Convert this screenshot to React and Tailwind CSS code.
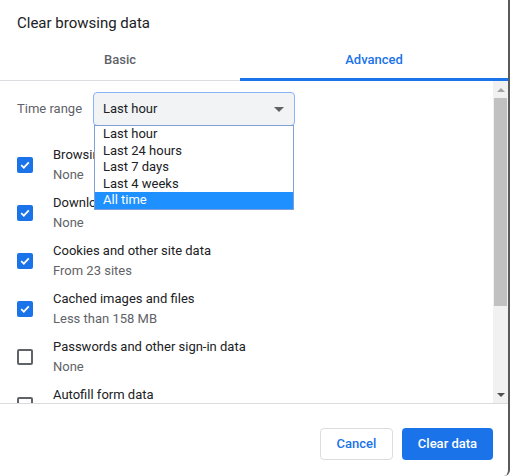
import React from 'react';

const items = [
  { title: 'Browsing history', sub: 'None', checked: true },
  { title: 'Download history', sub: 'None', checked: true },
  { title: 'Cookies and other site data', sub: 'From 23 sites', checked: true },
  { title: 'Cached images and files', sub: 'Less than 158 MB', checked: true },
  { title: 'Passwords and other sign-in data', sub: 'None', checked: false },
  { title: 'Autofill form data', sub: 'None', checked: false },
];

const ranges = ['Last hour', 'Last 24 hours', 'Last 7 days', 'Last 4 weeks', 'All time'];

function Checkbox({ checked }) {
  if (!checked) {
    return <div className="w-[16px] h-[16px] shrink-0 rounded-[2px] border-2 border-[#5f6368] bg-white" />;
  }
  return (
    <div className="w-[16px] h-[16px] shrink-0 rounded-[2px] bg-[#1a73e8] flex items-center justify-center">
      <svg width="12" height="12" viewBox="0 0 12 12">
        <path d="M2.2 6.2 L4.8 8.7 L9.8 3.4" fill="none" stroke="white" strokeWidth="1.8" />
      </svg>
    </div>
  );
}

export default function App() {
  return (
    <div className="w-[510px] h-[476px] bg-white flex flex-col border-r-2 border-[#5a5a5a] rounded-br-[6px] font-['Roboto','Liberation_Sans',sans-serif] text-[#202124] overflow-hidden">
      {/* Title */}
      <div className="h-[40px] pl-[17px] pt-[13px] text-[15px] leading-[20px]">Clear browsing data</div>

      {/* Tabs */}
      <div className="flex h-[41px]">
        <div className="w-[240px] flex items-center justify-center border-b border-[#dadce0] text-[13px] font-medium text-[#5f6368]">
          Basic
        </div>
        <div className="flex-1 flex items-center justify-center border-b-[3px] border-[#1a73e8] pt-[2px] text-[13px] font-medium text-[#1a73e8]">
          Advanced
        </div>
      </div>

      {/* Scroll area */}
      <div className="h-[323px] flex border-b border-[#dadce0]">
        <div className="flex-1 relative overflow-hidden">
          <div className="flex items-center pl-[17px] pt-[11px]">
            <span className="w-[76px] text-[13px] text-[#5f6368]">Time range</span>
            <div className="w-[202px] h-[34px] rounded-[4px] border border-[#8ab4f8] bg-[#f1f3f4] flex items-center justify-between pl-[9px] pr-[10px]">
              <span className="text-[13px]">Last hour</span>
              <svg width="10" height="5" viewBox="0 0 10 5">
                <path d="M0 0 L10 0 L5 5 Z" fill="#5f6368" />
              </svg>
            </div>
          </div>

          <div className="mt-[15px] flex flex-col">
            {items.map((it) => (
              <div key={it.title} className="h-[48px] flex items-center pl-[17px] gap-[20px]">
                <Checkbox checked={it.checked} />
                <div className="flex flex-col">
                  <span className="text-[13px] leading-[20px]">{it.title}</span>
                  <span className="text-[13px] leading-[20px] text-[#5f6368]">{it.sub}</span>
                </div>
              </div>
            ))}
          </div>

          {/* Open dropdown */}
          <div className="absolute left-[94px] top-[44px] w-[200px] bg-white border border-[#7f9fd6] flex flex-col">
            {ranges.map((r) => (
              <div
                key={r}
                className={`h-[16.6px] pl-[8px] text-[13px] leading-[16.6px] ${
                  r === 'All time' ? 'bg-[#1e90ff] text-white' : 'text-[#202124]'
                }`}
              >
                {r}
              </div>
            ))}
          </div>
        </div>

        {/* Scrollbar */}
        <div className="w-[15px] bg-[#f1f1f1] flex flex-col items-center">
          <div className="h-[17px] flex items-center justify-center">
            <svg width="8" height="4" viewBox="0 0 8 4">
              <path d="M0 4 L8 4 L4 0 Z" fill="#a3a3a3" />
            </svg>
          </div>
          <div className="w-[13px] h-[208px] bg-[#c1c1c1]" />
          <div className="flex-1" />
          <div className="h-[17px] flex items-center justify-center">
            <svg width="8" height="4" viewBox="0 0 8 4">
              <path d="M0 0 L8 0 L4 4 Z" fill="#505050" />
            </svg>
          </div>
        </div>
      </div>

      {/* Footer */}
      <div className="flex-1 flex items-start justify-end gap-[9px] pt-[24px] pr-[15px]">
        <button className="w-[73px] h-[32px] rounded-[4px] border border-[#dadce0] bg-white text-[13px] font-medium text-[#1a73e8]">
          Cancel
        </button>
        <button className="w-[91px] h-[32px] rounded-[4px] bg-[#1a73e8] text-[13px] font-medium text-white">
          Clear data
        </button>
      </div>
    </div>
  );
}
